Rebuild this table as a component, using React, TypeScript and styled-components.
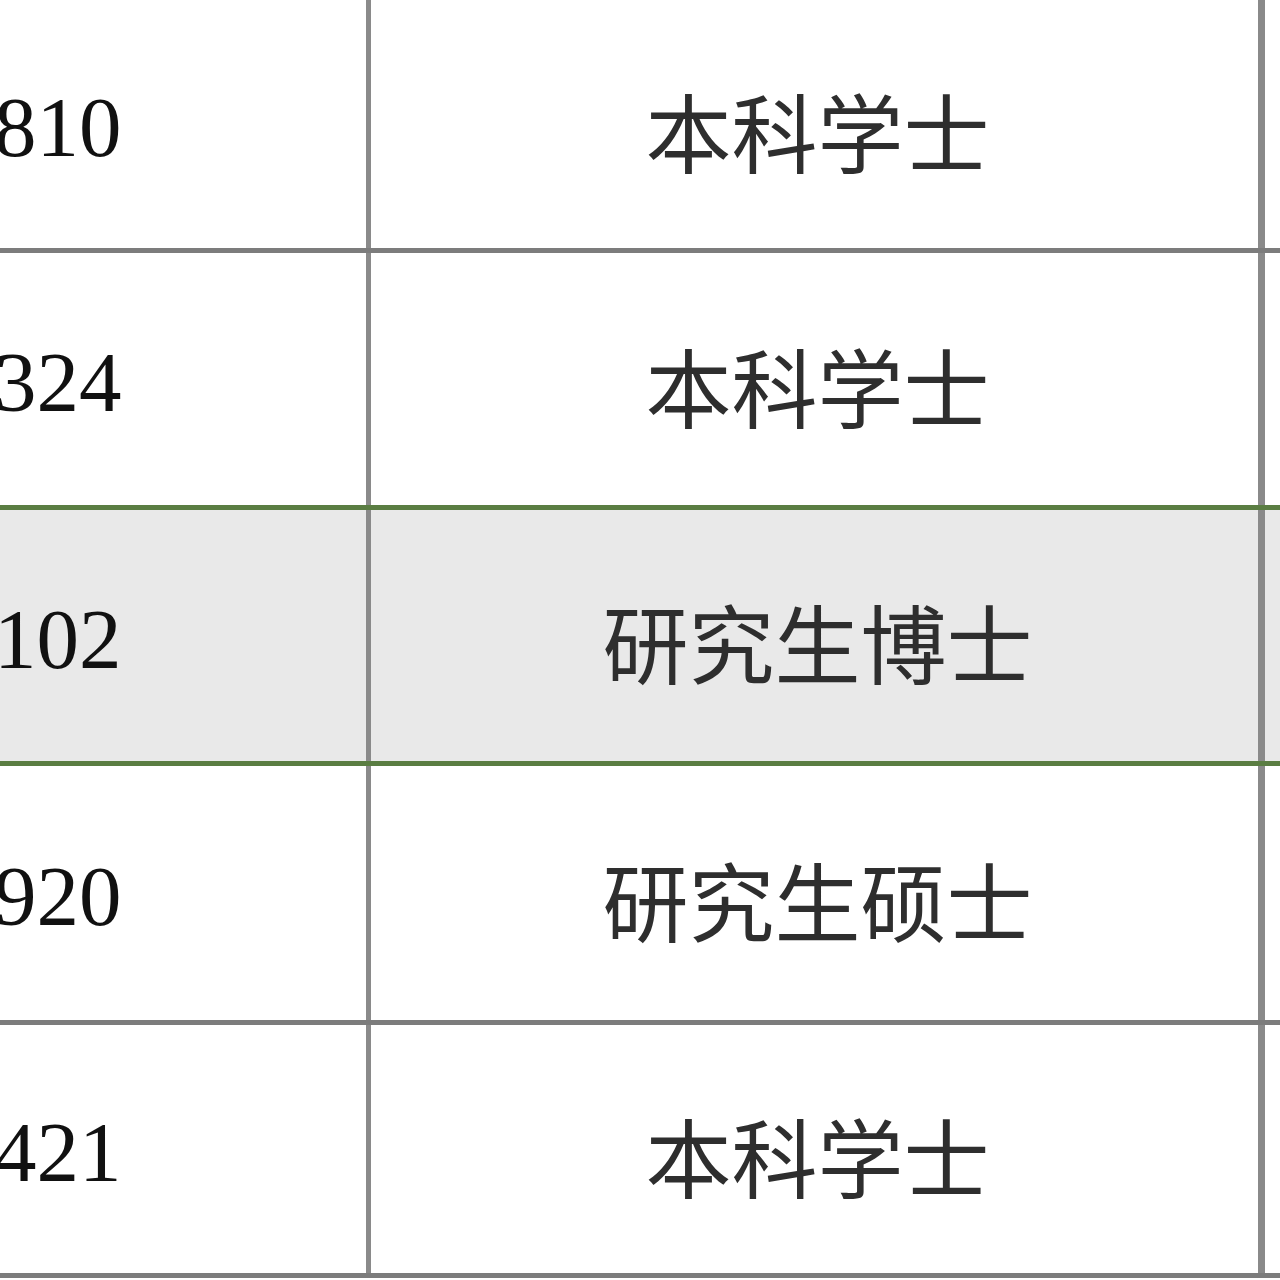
import React from "react";
import styled, { createGlobalStyle } from "styled-components";

const GlobalStyle = createGlobalStyle`
  html, body {
    margin: 0;
    padding: 0;
    background: #ffffff;
    overflow: hidden;
  }
`;

interface RowData {
  id: string;
  degree: string;
  height: number;
  line: string;
  shaded?: boolean;
}

const grey = "#7c7c7c";
const green = "#5a7d42";

const rows: RowData[] = [
  { id: "810", degree: "本科学士", height: 248, line: grey },
  { id: "324", degree: "本科学士", height: 252, line: green },
  { id: "102", degree: "研究生博士", height: 251, line: green, shaded: true },
  { id: "920", degree: "研究生硕士", height: 254, line: grey },
  { id: "421", degree: "本科学士", height: 248, line: grey },
];

export default function App() {
  return (
    <>
      <GlobalStyle />
      <Table>
        {rows.map((r) => (
          <Row key={r.id + r.degree} $height={r.height} $line={r.line}>
            <IdCell $shaded={r.shaded}>{r.id}</IdCell>
            <DegreeCell $shaded={r.shaded}>{r.degree}</DegreeCell>
            <EdgeCell $shaded={r.shaded} />
          </Row>
        ))}
      </Table>
    </>
  );
}

const Table = styled.div`
  width: 1280px;
  height: 1280px;
  display: flex;
  flex-direction: column;
  background: #ffffff;
  overflow: hidden;
`;

const Row = styled.div<{ $height: number; $line: string }>`
  display: flex;
  flex-shrink: 0;
  height: ${(p) => p.$height}px;
  border-bottom: 5px solid ${(p) => p.$line};
`;

const Cell = styled.div<{ $shaded?: boolean }>`
  display: flex;
  align-items: center;
  background: ${(p) => (p.$shaded ? "#e9e9e9" : "#ffffff")};
`;

const IdCell = styled(Cell)`
  width: 366px;
  flex-shrink: 0;
  border-right: 5px solid #8a8a8a;
  font-family: "Liberation Serif", "Times New Roman", serif;
  font-size: 85px;
  color: #111111;
  text-indent: -6px;
  padding-top: 6px;
`;

const DegreeCell = styled(Cell)`
  width: 894px;
  flex-shrink: 0;
  justify-content: center;
  border-right: 7px solid #8a8a8a;
  font-family: "Noto Sans CJK SC", "Noto Sans", sans-serif;
  font-weight: 400;
  font-size: 86px;
  color: #2e2e2e;
  padding-top: 10px;
  box-sizing: border-box;
  padding-left: 6px;
`;

const EdgeCell = styled(Cell)`
  flex: 1;
`;
